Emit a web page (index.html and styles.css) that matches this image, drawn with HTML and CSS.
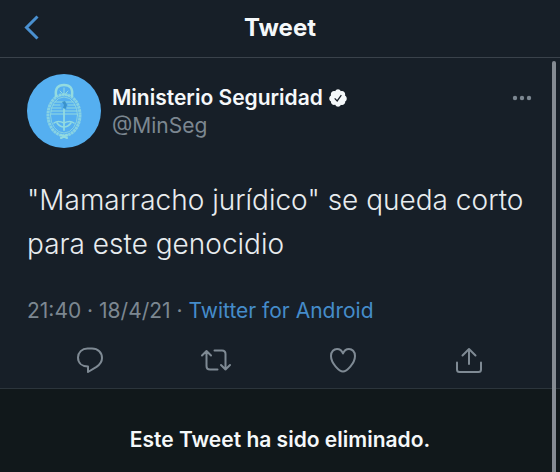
FILE: index.html
```
<!DOCTYPE html>
<html lang="es">
<head>
    <meta charset="UTF-8">
    <meta name="viewport" content="width=device-width, initial-scale=1.0">
    <title>Tweet</title>
    <link rel="stylesheet" href="styles.css">
</head>
<body>
    <header class="topbar">
        <button class="icon-button back" type="button" aria-label="Volver">
            <svg width="16" height="26" viewBox="0 0 16 26"><path d="M13.500 1.500 L2.500 12.500 L13.500 23.500"/></svg>
        </button>
        <h1>Tweet</h1>
    </header>
    <main class="thread">
        <article class="tweet">
            <div class="author">
                <svg class="avatar" viewBox="0 0 74 74" role="img" aria-label="Escudo">
                    <circle cx="37" cy="37" r="37" fill="#55aff0"/>
                    <g fill="none" stroke="#93dbe0" stroke-linecap="round">
                        <ellipse cx="37" cy="41" rx="16" ry="20.500" stroke-width="3" stroke-dasharray="2.600 .500" stroke-linecap="butt" opacity=".8"/>
                        <ellipse cx="37" cy="41" rx="13.500" ry="18" stroke-width=".8"/>
                        <path d="M29 22 C28 14 31 11 37 11 S46 14 45 22" stroke-width="2.500"/>
                        <path d="M33 17 l2 2 M41 17 l-2 2 M32 22 q5 -3 10 0 M37 14 V20"/>
                        <path d="M28 28 H46 M26 31 H33 M41 31 H48 M25 34 H34 M40 34 H49 M24 37 H50 M24 40 H50" stroke-width="1"/>
                        <path d="M37 35 V56" stroke-width="1.800"/>
                        <path d="M27 49 Q31 46 37 49 Q43 46 47 49 M30 49 Q33 53 37 53 Q41 53 44 49" stroke-width="1.500"/>
                        <path d="M34 64 L40 61 M40 64 L34 61" stroke-width="2"/>
                    </g>
                    <path d="M35 28 L38 27 L40 31 L38.500 35 L36 34 L37 31 Z" fill="#3b92cb"/>
                </svg>
                <div class="names">
                    <div class="name">
                        Ministerio Seguridad
                        <svg class="verified" width="20" height="20" viewBox="0 0 24 24" role="img" aria-label="Cuenta verificada">
                            <path fill="#f5f8fa" d="M22.500 12.500c0-1.600-.900-3-2.100-3.600.100-.400.200-.900.200-1.400 0-2.200-1.700-3.900-3.800-3.900-.500 0-1 .100-1.400.300C14.800 2.500 13.500 1.500 12 1.500s-2.800 1-3.400 2.400c-.400-.200-.900-.300-1.400-.300-2.100 0-3.800 1.700-3.800 3.900 0 .500.100 1 .200 1.400-1.200.600-2.100 2-2.100 3.600 0 1.500.800 2.800 2 3.500v.400c0 2.200 1.700 3.900 3.800 3.900.500 0 1-.100 1.400-.200.600 1.400 1.900 2.300 3.400 2.300s2.800-.900 3.400-2.300c.400.200.900.200 1.400.200 2.100 0 3.800-1.700 3.800-3.900v-.400c1.200-.700 1.800-2 1.800-3.500z"/>
                            <path d="M8 12.500 L11 15.500 L16 8.500" fill="none" stroke="#192029" stroke-width="1.500"/>
                        </svg>
                    </div>
                    <div class="handle">@MinSeg</div>
                </div>
                <button class="icon-button more" type="button" aria-label="Más opciones">
                    <svg width="20" height="6" viewBox="0 0 20 6"><circle cx="3" cy="3" r="2.200"/><circle cx="10" cy="3" r="2.200"/><circle cx="17" cy="3" r="2.200"/></svg>
                </button>
            </div>
            <p class="text">"Mamarracho jurídico" se queda corto para este genocidio</p>
            <div class="meta">21:40 · 18/4/21 · <a href="#">Twitter for Android</a></div>
            <div class="actions">
                <button class="icon-button" type="button" aria-label="Responder">
                    <svg width="30" height="30" viewBox="0 0 30 30"><path d="M12.500 3.500 H17 C23 3.500 27 7.500 27 13 C27 17 25 19.500 21.500 21.800 L13 27 V21.500 C7 21.500 3 18 3 12.500 C3 7.500 7 3.500 12.500 3.500 Z"/></svg>
                </button>
                <button class="icon-button" type="button" aria-label="Retwittear">
                    <svg width="32" height="30" viewBox="0 0 32 30"><path d="M2 10.500 L6.500 6 L11 10.500 M6.500 6 V21 Q6.500 24.500 10 24.500 H17.500 M14.500 5.500 H22 Q25.500 5.500 25.500 9 V24.500 M21 20 L25.500 24.500 L30 20"/></svg>
                </button>
                <button class="icon-button" type="button" aria-label="Me gusta">
                    <svg width="30" height="30" viewBox="0 0 30 30"><path d="M15 26.500 C11.500 26.500 3 18.500 3 11 C3 6.500 6 4 9 4 C12 4 14 5.800 15 8.500 C16 5.800 18 4 21 4 C24 4 27 6.500 27 11 C27 18.500 18.500 26.500 15 26.500 Z"/></svg>
                </button>
                <button class="icon-button" type="button" aria-label="Compartir">
                    <svg width="30" height="30" viewBox="0 0 30 30"><path d="M15 19 V4 M8.500 10.500 L15 4 L21.500 10.500 M3 17.500 V24.500 Q3 27 5.500 27 H24.500 Q27 27 27 24.500 V17.500"/></svg>
                </button>
            </div>
        </article>
        <div class="notice">Este Tweet ha sido eliminado.</div>
        <div class="scrollbar"></div>
    </main>
</body>
</html>
```

FILE: styles.css
```
* {
    box-sizing: border-box;
}
body {
    display: flex;
    flex-direction: column;
    min-height: 100vh;
    margin: 0;
    background-color: #171f28;
    color: #f5f8fa;
    font-family: Inter, "Liberation Sans", sans-serif;
}
.topbar {
    display: grid;
    grid-template-columns: 32px 1fr 32px;
    align-items: center;
    height: 58px;
    padding: 0 16px 2px;
    border-bottom: 1px solid #3a424b;
}
h1 {
    margin: 0;
    font-size: 24px;
    line-height: 32px;
    font-weight: 700;
    text-align: center;
}
.icon-button {
    display: flex;
    align-items: center;
    justify-content: center;
    padding: 0;
    border: none;
    background: none;
    cursor: pointer;
}
.icon-button svg {
    fill: none;
    stroke: #7f8a94;
    stroke-width: 2;
    stroke-linecap: round;
    stroke-linejoin: round;
}
.back svg {
    stroke: #4a90d0;
    stroke-width: 3;
    stroke-linecap: butt;
    stroke-linejoin: miter;
}
.thread {
    position: relative;
    display: flex;
    flex-direction: column;
    flex: 1;
}
.tweet {
    padding: 16px 28px 13px 27px;
    border-bottom: 1px solid #2c353c;
}
.author {
    display: flex;
    align-items: flex-start;
    gap: 11px;
}
.avatar {
    flex: none;
    width: 74px;
    height: 74px;
}
.names {
    flex: 1;
    padding-top: 10px;
    font-size: 21px;
    line-height: 28px;
}
.name {
    display: flex;
    align-items: center;
    gap: 5px;
    font-weight: 600;
}
.handle {
    color: #7c8791;
}
.more {
    height: 48px;
}
.more svg {
    fill: #7c8791;
    stroke: none;
}
.text {
    margin: 30px 0 0;
    color: #e8ecef;
    font-size: 28px;
    line-height: 44px;
    font-weight: 300;
}
.meta {
    margin-top: 31px;
    color: #7c8791;
    font-size: 21px;
    line-height: 28px;
}
.meta a {
    color: #458cca;
    text-decoration: none;
}
.actions {
    display: grid;
    grid-template-columns: repeat(4, 1fr);
    margin-top: 20px;
}
.notice {
    flex: 1;
    padding: 37px 20px 20px;
    background-color: #11181b;
    font-size: 21px;
    line-height: 28px;
    font-weight: 600;
    text-align: center;
}
.scrollbar {
    position: absolute;
    top: 3px;
    right: 4px;
    bottom: 0;
    width: 4px;
    border-radius: 2px 2px 0 0;
    background-color: #858b93;
}
```
